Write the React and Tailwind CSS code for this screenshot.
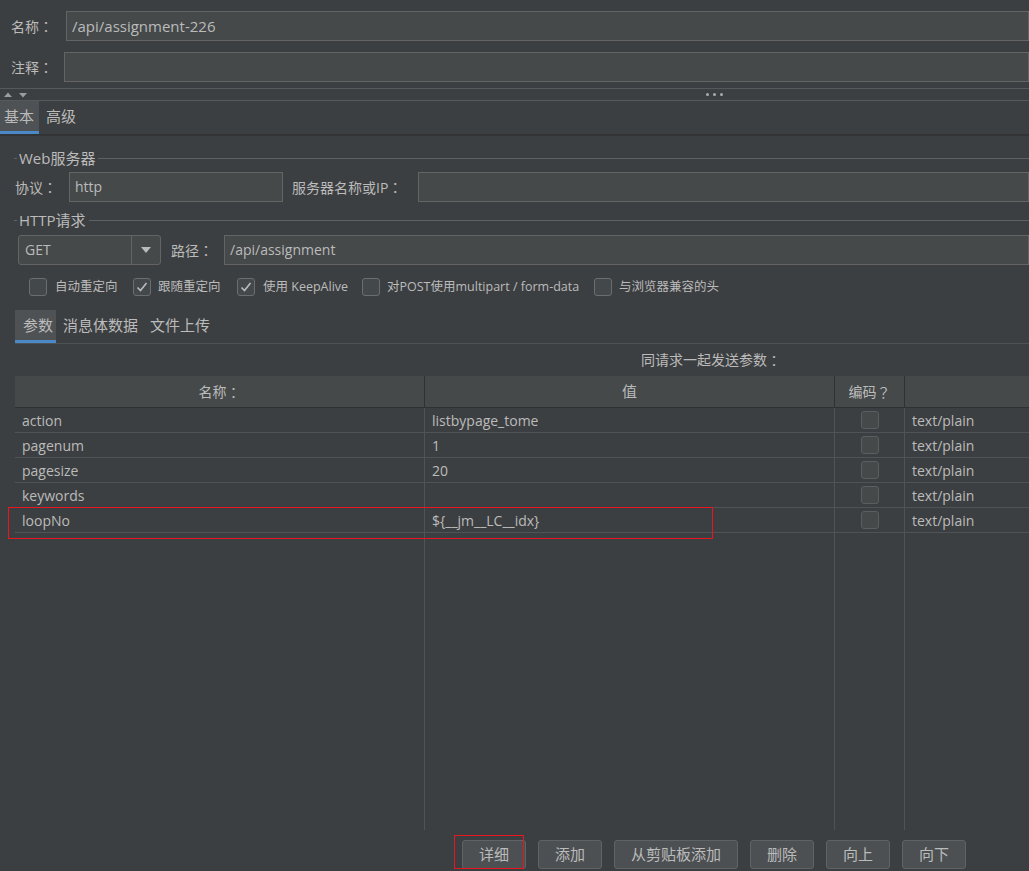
import React from 'react'

const rows = [
    { name: 'action', value: 'listbypage_tome' },
    { name: 'pagenum', value: '1' },
    { name: 'pagesize', value: '20' },
    { name: 'keywords', value: '' },
    { name: 'loopNo', value: '${__jm__LC__idx}' },
]

// fullwidth punctuation centred like the Windows UI font
const P = ({ children }) => <span className="font-['Noto_Sans_CJK_JP',sans-serif]">{children}</span>

const Check = ({ checked }) => (
    <div className="w-[18px] h-[18px] shrink-0 rounded-[3px] border border-[#6b6e70] bg-[#43484a] flex items-center justify-center">
        {checked && (
            <svg width="14" height="14" viewBox="0 0 14 14">
                <polyline points="2.5,7.5 5.5,10.5 11.5,3" fill="none" stroke="#bbbbbb" strokeWidth="1.6" />
            </svg>
        )}
    </div>
)

const Input = ({ className = '', children }) => (
    <div className={`h-full bg-[#45494a] border border-[#646464] flex items-center pl-[5px] ${className}`}>{children}</div>
)

const GroupTitle = ({ title, className = '' }) => (
    <div className={`flex items-center h-[20px] ${className}`}>
        <div className="ml-[14px] w-[3px] h-px bg-[#5e6164]" />
        <span className="ml-[2px] text-[15px] leading-none">{title}</span>
        <div className="ml-[3px] flex-1 h-px bg-[#5e6164]" />
    </div>
)

const Button = ({ label, w }) => (
    <div className={`${w} h-full rounded-[3px] border border-[#5e6366] bg-[#4c5052] flex items-center justify-center text-[15px]`}>{label}</div>
)

const App = () => {
    return (
        <div className="relative w-[1029px] h-[871px] overflow-hidden bg-[#3c3f41] text-[#bbbbbb] text-[14px] leading-none font-['Open_Sans','Noto_Sans_CJK_SC',sans-serif]">
            {/* name + comment */}
            <div className="flex h-[30px] mt-[11px] items-center">
                <span className="w-[66px] pl-[11px]">名称<P>：</P></span>
                <Input className="flex-1 text-[15px]">/api/assignment-226</Input>
            </div>
            <div className="flex h-[30px] mt-[11px] items-center">
                <span className="w-[64px] pl-[11px]">注释<P>：</P></span>
                <Input className="flex-1" />
            </div>

            {/* splitter */}
            <div className="mt-[6px] h-[13px] border-t border-b border-[#56595c] flex items-center">
                <svg className="ml-[4px]" width="24" height="8" viewBox="0 0 24 8">
                    <polygon points="0,6 4,1.5 8,6" fill="#9a9da0" />
                    <polygon points="15,2 23,2 19,6.5" fill="#9a9da0" />
                </svg>
                <div className="ml-[678px] flex gap-[4px]">
                    <div className="w-[3px] h-[3px] rounded-full bg-[#a9acaf]" />
                    <div className="w-[3px] h-[3px] rounded-full bg-[#a9acaf]" />
                    <div className="w-[3px] h-[3px] rounded-full bg-[#a9acaf]" />
                </div>
            </div>

            {/* top tabs */}
            <div className="h-[35px] flex border-b-2 border-[#323436] text-[15px]">
                <div className="w-[39px] pl-[4px] flex items-center bg-[#4e5254] border-b-[3px] border-[#4a88c7]">基本</div>
                <div className="pl-[7px] flex items-center pb-[3px]">高级</div>
            </div>

            {/* web server */}
            <GroupTitle title="Web服务器" className="mt-[12px]" />
            <div className="flex h-[30px] mt-[4px] items-center">
                <span className="w-[69px] pl-[15px]">协议<P>：</P></span>
                <Input className="w-[214px]">http</Input>
                <span className="ml-[9px] w-[126px]">服务器名称或IP<P>：</P></span>
                <Input className="flex-1" />
            </div>

            {/* http request */}
            <GroupTitle title="HTTP请求" className="mt-[8px]" />
            <div className="flex h-[30px] mt-[5px] items-center">
                <div className="ml-[18px] w-[143px] h-full flex rounded-[3px] border border-[#646464] bg-[#45494a]">
                    <div className="w-[113px] pl-[6px] flex items-center border-r border-[#646464]">GET</div>
                    <div className="flex-1 flex items-center justify-center">
                        <svg width="10" height="6" viewBox="0 0 10 6">
                            <polygon points="0,0 10,0 5,6" fill="#bbbbbb" />
                        </svg>
                    </div>
                </div>
                <span className="ml-[10px] w-[53px]">路径<P>：</P></span>
                <Input className="flex-1">/api/assignment</Input>
            </div>

            {/* options */}
            <div className="flex h-[18px] mt-[13px] items-center text-[12.5px]">
                <div className="ml-[29px] w-[104px] flex items-center"><Check /><span className="ml-[8px]">自动重定向</span></div>
                <div className="w-[104px] flex items-center"><Check checked /><span className="ml-[7px]">跟随重定向</span></div>
                <div className="w-[125px] flex items-center"><Check checked /><span className="ml-[8px]">使用 KeepAlive</span></div>
                <div className="w-[232px] flex items-center"><Check /><span className="ml-[7px] whitespace-nowrap">对POST使用multipart / form-data</span></div>
                <div className="flex items-center"><Check /><span className="ml-[7px]">与浏览器兼容的头</span></div>
            </div>

            {/* sub tabs */}
            <div className="ml-[15px] mt-[14px] h-[33px] flex text-[15px]">
                <div className="w-[41px] pl-[8px] flex items-center bg-[#4e5254] border-b-[3px] border-[#4a88c7]">参数</div>
                <div className="pl-[7px] flex items-center pb-[3px]">消息体数据</div>
                <div className="pl-[12px] flex items-center pb-[3px]">文件上传</div>
            </div>
            <div className="ml-[15px] h-px bg-[#4f5254]" />

            <div className="h-[32px] flex items-center pl-[641px]">同请求一起发送参数<P>：</P></div>

            {/* table */}
            <div className="ml-[15px]">
                <div className="h-[32px] flex bg-[#45494a] border-b border-[#2f3234]">
                    <div className="w-[410px] border-r border-[#2f3234] flex items-center justify-center">名称<P>：</P></div>
                    <div className="w-[410px] border-r border-[#2f3234] flex items-center justify-center text-[15px]">值</div>
                    <div className="w-[70px] border-r border-[#2f3234] flex items-center justify-center">编码<P>？</P></div>
                    <div className="flex-1" />
                </div>
                <div className="h-[422px] flex">
                    <div className="w-[410px] border-r border-[#505356]">
                        {rows.map((r) => (
                            <div key={r.name} className="h-[25px] border-b border-[#505356] flex items-center pl-[7px] pt-px">{r.name}</div>
                        ))}
                    </div>
                    <div className="w-[410px] border-r border-[#505356]">
                        {rows.map((r) => (
                            <div key={r.name} className="h-[25px] border-b border-[#505356] flex items-center pl-[7px] pt-px">{r.value}</div>
                        ))}
                    </div>
                    <div className="w-[70px] border-r border-[#505356]">
                        {rows.map((r) => (
                            <div key={r.name} className="h-[25px] border-b border-[#505356] flex items-center justify-center">
                                <div className="w-[18px] h-[18px] rounded-[3px] border border-[#5b5e61] bg-[#45494a]" />
                            </div>
                        ))}
                    </div>
                    <div className="flex-1">
                        {rows.map((r) => (
                            <div key={r.name} className="h-[25px] border-b border-[#505356] flex items-center pl-[7px] pt-px">text/plain</div>
                        ))}
                    </div>
                </div>
            </div>

            {/* buttons */}
            <div className="mt-[10px] h-[29px] flex pl-[462px] gap-[12px]">
                <Button label="详细" w="w-[64px]" />
                <Button label="添加" w="w-[64px]" />
                <Button label="从剪贴板添加" w="w-[124px]" />
                <Button label="删除" w="w-[64px]" />
                <Button label="向上" w="w-[64px]" />
                <Button label="向下" w="w-[64px]" />
            </div>

            {/* red annotation boxes */}
            <div className="absolute left-[8px] top-[507px] w-[705px] h-[32px] border border-[#e8171f]" />
            <div className="absolute left-[454px] top-[835px] w-[70px] h-[34px] border border-[#e8171f]" />
        </div>
    )
}

export default App
